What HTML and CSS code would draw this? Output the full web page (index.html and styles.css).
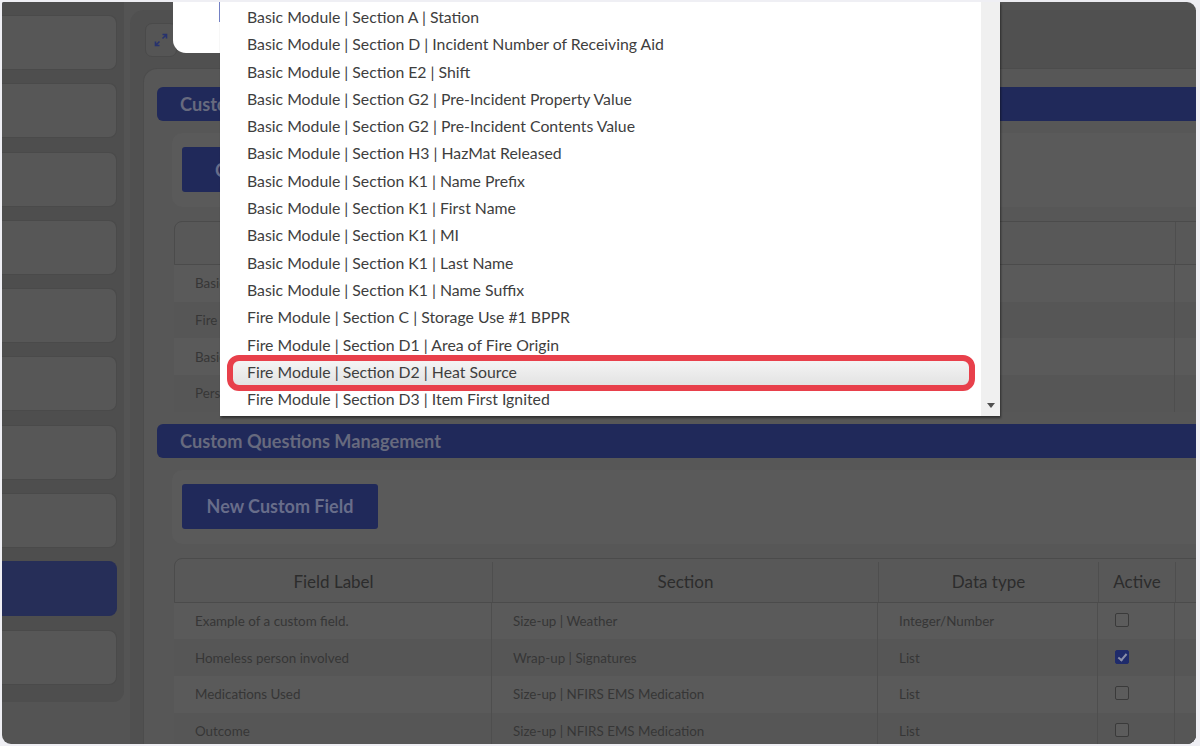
FILE: index.html
```html
<!DOCTYPE html>
<html lang="en">
<head>
<meta charset="UTF-8">
<title>Custom Questions Management</title>
<link rel="stylesheet" href="styles.css">
</head>
<body>
<div class="screen">
  <aside class="sidebar">
    <div class="nav-card"></div>
    <div class="nav-card"></div>
    <div class="nav-card"></div>
    <div class="nav-card"></div>
    <div class="nav-card"></div>
    <div class="nav-card"></div>
    <div class="nav-card"></div>
    <div class="nav-card"></div>
    <div class="nav-card active"></div>
    <div class="nav-card"></div>
  </aside>

  <main class="main">
    <div class="toolbar">
      <button class="expand-btn" type="button">
        <svg width="16" height="16" viewBox="0 0 16 16">
          <path d="M9.5 2.5h4v4M13.5 2.5l-4 4M6.5 13.5h-4v-4M2.5 13.5l4-4" fill="none" stroke="#27326e" stroke-width="1.6"/>
        </svg>
      </button>
    </div>

    <div class="content">
      <section class="section">
        <h3 class="section-title">Custom Fields Management</h3>
        <div class="section-body">
          <div class="action-card">
            <button class="btn-primary" type="button">Configure Fields</button>
          </div>
          <div class="table table-fields">
            <div class="row head">
              <div class="cell">Field</div>
              <div class="cell">Required</div>
            </div>
            <div class="row"><div class="cell">Basic Module | Section K1 | Name Prefix</div><div class="cell"></div></div>
            <div class="row"><div class="cell">Fire Module | Section D2 | Heat Source</div><div class="cell"></div></div>
            <div class="row"><div class="cell">Basic Module | Section A | Station</div><div class="cell"></div></div>
            <div class="row"><div class="cell">Personnel | Section B | Unit</div><div class="cell"></div></div>
          </div>
        </div>
      </section>

      <section class="section">
        <h3 class="section-title">Custom Questions Management</h3>
        <div class="section-body">
          <div class="action-card">
            <button class="btn-primary" type="button">New Custom Field</button>
          </div>
          <div class="table table-questions">
            <div class="row head">
              <div class="cell">Field Label</div>
              <div class="cell">Section</div>
              <div class="cell">Data type</div>
              <div class="cell">Active</div>
              <div class="cell"></div>
            </div>
            <div class="row">
              <div class="cell">Example of a custom field.</div>
              <div class="cell">Size-up | Weather</div>
              <div class="cell">Integer/Number</div>
              <div class="cell"><span class="check"></span></div>
              <div class="cell"></div>
            </div>
            <div class="row">
              <div class="cell">Homeless person involved</div>
              <div class="cell">Wrap-up | Signatures</div>
              <div class="cell">List</div>
              <div class="cell"><span class="check checked"></span></div>
              <div class="cell"></div>
            </div>
            <div class="row">
              <div class="cell">Medications Used</div>
              <div class="cell">Size-up | NFIRS EMS Medication</div>
              <div class="cell">List</div>
              <div class="cell"><span class="check"></span></div>
              <div class="cell"></div>
            </div>
            <div class="row">
              <div class="cell">Outcome</div>
              <div class="cell">Size-up | NFIRS EMS Medication</div>
              <div class="cell">List</div>
              <div class="cell"><span class="check"></span></div>
              <div class="cell"></div>
            </div>
          </div>
        </div>
      </section>
    </div>
  </main>
</div>

<!-- popup open over the dimmed page -->
<div class="modal-top"></div>
<div class="dropdown">
  <ul class="options">
    <li>Basic Module | Section A | Station</li>
    <li>Basic Module | Section D | Incident Number of Receiving Aid</li>
    <li>Basic Module | Section E2 | Shift</li>
    <li>Basic Module | Section G2 | Pre-Incident Property Value</li>
    <li>Basic Module | Section G2 | Pre-Incident Contents Value</li>
    <li>Basic Module | Section H3 | HazMat Released</li>
    <li>Basic Module | Section K1 | Name Prefix</li>
    <li>Basic Module | Section K1 | First Name</li>
    <li>Basic Module | Section K1 | MI</li>
    <li>Basic Module | Section K1 | Last Name</li>
    <li>Basic Module | Section K1 | Name Suffix</li>
    <li>Fire Module | Section C | Storage Use #1 BPPR</li>
    <li>Fire Module | Section D1 | Area of Fire Origin</li>
    <li class="hover">Fire Module | Section D2 | Heat Source</li>
    <li>Fire Module | Section D3 | Item First Ignited</li>
  </ul>
  <div class="scrollbar"><span class="arrow-down"></span></div>
</div>
<div class="annotation"></div>
</body>
</html>
```

FILE: styles.css
```css
* {
  box-sizing: border-box;
}

body {
  margin: 0;
  background-color: #efeff4;
  font-family: Lato, "Open Sans", Arial, sans-serif;
  overflow: hidden;
}

.screen {
  display: flex;
  align-items: flex-start;
  margin: 2px 4px 2px 2px;
  height: 742px;
  background-color: #545454;
  border-radius: 2px 9px 9px 9px;
  overflow: hidden;
}

/* left navigation */
.sidebar {
  flex: 0 0 122px;
  height: 700px;
  padding-top: 13px;
  background-color: #4e4e4e;
  border-radius: 0 0 11px 0;
  display: flex;
  flex-direction: column;
  gap: 13.3px;
}

.nav-card {
  width: 115px;
  height: 55px;
  background-color: #575757;
  border: 1px solid #4a4a4a;
  border-left: none;
  border-radius: 0 8px 8px 0;
}

.nav-card.active {
  background-color: #262e58;
  border-color: #262e58;
}

/* main panel */
.main {
  flex: 1;
  min-width: 0;
  margin: 8px 0 0 6px;
  height: 740px;
  padding-left: 13px;
  background-color: #505050;
  border-radius: 14px 0 0 0;
}

.toolbar {
  height: 58px;
  padding-top: 13px;
}

.expand-btn {
  display: flex;
  align-items: center;
  justify-content: center;
  width: 32px;
  height: 34px;
  margin-left: 2px;
  padding: 0;
  background-color: #555;
  border: 1px solid #4a4a4a;
  border-radius: 7px;
}

.content {
  height: 700px;
  padding: 18px 0 0 13px;
  background-color: #575757;
  border: 1px solid #4c4c4c;
  border-right: none;
  border-radius: 14px 0 0 0;
}

.section {
  margin-bottom: 12px;
}

.section-title {
  margin: 0;
  height: 34px;
  line-height: 34px;
  padding-left: 23px;
  background-color: #20295a;
  border-radius: 6px 0 0 6px;
  color: #676a7e;
  font-size: 18.2px;
  font-weight: bold;
}

.section-body {
  padding-left: 15px;
}

.action-card {
  margin-top: 12px;
  padding: 14px 10px 15px;
  background-color: #5a5a5a;
  border-radius: 10px 0 0 10px;
}

.btn-primary {
  display: block;
  width: 196px;
  height: 45px;
  padding: 0;
  background-color: #20295a;
  border: none;
  border-radius: 3px;
  color: #686d8a;
  font-family: inherit;
  font-size: 18px;
  font-weight: bold;
}

/* tables */
.table {
  margin: 14px 0 0 2px;
  width: 1200px;
}

.row {
  display: grid;
  height: 36.7px;
  align-items: stretch;
}

.row:nth-child(even) {
  background-color: #5a5a5a;
}

.row:nth-child(odd) {
  background-color: #565656;
}

.row.head {
  height: 44px;
  background-color: #585858;
  border: 1px solid #4b4b4b;
  border-radius: 8px 0 0 0;
}

.table-fields .row {
  grid-template-columns: 1000px 200px;
}

.table-questions .row {
  grid-template-columns: 317px 386px 220px 77px 200px;
}

.table-questions {
  margin-top: 14px;
}

.table-questions .row.head {
  height: 45px;
  padding-top: 3px;
}

.cell {
  display: flex;
  align-items: center;
  padding-left: 21px;
  color: #363636;
  font-size: 13.4px;
  border-left: 1px solid #4e4e4e;
  white-space: nowrap;
}

.cell:first-child {
  border-left: none;
}

.head .cell {
  justify-content: center;
  padding-left: 0;
  color: #2c2c2c;
  font-size: 17px;
}

.table-questions .row .cell:nth-child(4) {
  padding-left: 17px;
}

.head .cell:nth-child(4) {
  padding-left: 0 !important;
}

.check {
  width: 14px;
  height: 14px;
  border: 1px solid #3a3a3a;
  border-radius: 2px;
  background-color: #5c5c5c;
  margin-top: -2px;
}

.check.checked {
  position: relative;
  background-color: #1f2b6b;
  border-color: #1f2b6b;
}

.check.checked::after {
  content: "";
  position: absolute;
  left: 4px;
  top: 1px;
  width: 3px;
  height: 7px;
  border: solid #8a8fa8;
  border-width: 0 2px 2px 0;
  transform: rotate(40deg);
}

/* open select popup */
.modal-top {
  position: absolute;
  left: 173px;
  top: 2px;
  width: 827px;
  height: 51px;
  background-color: #fff;
  border-radius: 0 0 0 13px;
}

.dropdown {
  position: absolute;
  left: 220px;
  top: 2px;
  width: 780px;
  height: 414px;
  display: flex;
  background-color: #fff;
  box-shadow: 1px 2px 2px rgba(0, 0, 0, 0.45);
}

.dropdown::before {
  content: "";
  position: absolute;
  left: -1px;
  top: 0;
  height: 20px;
  border-left: 1px solid #7380c4;
}

.options {
  flex: 1;
  margin: 0;
  padding: 1px 0 0;
  list-style: none;
}

.options li {
  height: 27.3px;
  line-height: 27.3px;
  padding-left: 27px;
  color: #3e3e3e;
  font-size: 15.8px;
  white-space: nowrap;
}

.options li.hover {
  margin: 0 10px 0 12px;
  padding-left: 15px;
  background: linear-gradient(#f6f6f6, #e3e3e3);
}

.scrollbar {
  position: relative;
  width: 19px;
  background-color: #f0f0f0;
}

.arrow-down {
  position: absolute;
  left: 6px;
  bottom: 8px;
  border-left: 4px solid transparent;
  border-right: 4px solid transparent;
  border-top: 5px solid #505050;
}

.annotation {
  position: absolute;
  left: 227px;
  top: 355px;
  width: 748px;
  height: 36px;
  border: 6px solid #e8404b;
  border-radius: 12px;
}
```
